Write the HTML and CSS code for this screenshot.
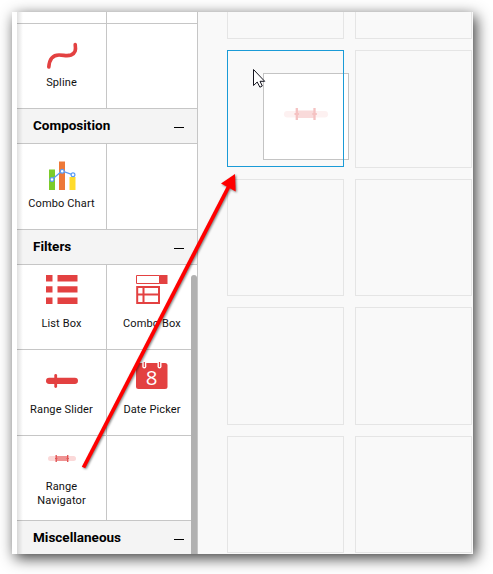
FILE: index.html
```html
<!DOCTYPE html>
<html lang="en">
<head>
<meta charset="utf-8">
<title>Dashboard Designer</title>
<link rel="stylesheet" href="styles.css">
</head>
<body>
<div class="window">
  <aside class="toolbox">
    <div class="row row-cut"><div class="tile"></div><div class="tile"></div></div>
    <div class="row">
      <div class="tile">
        <svg class="icon" width="34" height="34" viewBox="0 0 34 34"><path d="M3.800 32C4.500 23 9 20 14 20C19 20 22 21.500 26 20C30.500 18 31 15 30.200 9.500" fill="none" stroke="#e34141" stroke-width="3.600" stroke-linecap="round"/></svg>
        <span>Spline</span>
      </div>
      <div class="tile"></div>
    </div>
    <h2 class="section">Composition<i class="minus"></i></h2>
    <div class="row tall">
      <div class="tile">
        <svg class="icon" width="34" height="34" viewBox="0 0 34 34">
          <path fill="#7ccc29" d="M4 13.500h6V34H4z"/><path fill="#ed7838" d="M14 5.500h6V34h-6z"/><path fill="#ffdb2b" d="M24.500 21h6v13h-6z"/>
          <path d="M7 23.500l10-8.500 11 3.800" fill="none" stroke="#5b9cf5" stroke-width="1.300"/>
          <g fill="#fff" stroke="#5b9cf5" stroke-width="1.200"><circle cx="7" cy="23.500" r="1.900"/><circle cx="17.200" cy="15.300" r="1.900"/><circle cx="28" cy="18.800" r="1.900"/></g>
        </svg>
        <span>Combo Chart</span>
      </div>
      <div class="tile"></div>
    </div>
    <h2 class="section">Filters<i class="minus"></i></h2>
    <div class="row">
      <div class="tile high-icon">
        <svg class="icon" width="34" height="34" viewBox="0 0 34 34"><path fill="#e34141" d="M1 5h6.500v6.500H1zM12.500 5h20v6.500h-20zM1 16.300h6.500v6.300H1zM12.500 16.300h20v6.300h-20zM1 27.500h6.500V34H1zM12.500 27.500h20V34h-20z"/></svg>
        <span>List Box</span>
      </div>
      <div class="tile high-icon">
        <svg class="icon" width="34" height="34" viewBox="0 0 34 34"><path d="M1.500 5.500h23v8h-23z" fill="none" stroke="#e34141"/><path fill="#e34141" d="M24.500 5H32.500v9h-8z"/><path d="M2.200 17H24v16H2.200zM2 24.500h22M8.500 17v16" fill="none" stroke="#e34141" stroke-width="2"/></svg>
        <span>Combo Box</span>
      </div>
    </div>
    <div class="row tall">
      <div class="tile">
        <svg class="icon" width="34" height="34" viewBox="0 0 34 34"><rect x="1" y="15.700" width="32" height="6.300" rx="3.150" fill="#e34141"/><rect x="9.300" y="12" width="2.800" height="14" rx="1.400" fill="#e34141"/></svg>
        <span>Range Slider</span>
      </div>
      <div class="tile">
        <svg class="icon" width="34" height="34" viewBox="0 0 34 34"><rect x="1" y="1" width="31.500" height="26" rx="2.500" fill="#e34141"/><rect x="7.300" y="-1.500" width="4" height="8" rx="2" fill="#fff"/><rect x="22.500" y="-1.500" width="4" height="8" rx="2" fill="#fff"/><path d="M9.300 0v5M24.500 0v5" stroke="#e34141" stroke-width="1.200"/><text x="16.800" y="22.500" class="day">8</text></svg>
        <span>Date Picker</span>
      </div>
    </div>
    <div class="row">
      <div class="tile two-line">
        <svg class="icon" width="34" height="34" viewBox="0 0 34 34"><rect x="3" y="15" width="28" height="5" rx="2.500" fill="#fbd9d9"/><rect x="11" y="15" width="12" height="5" fill="#ef9292"/><path d="M11.200 14v7M22.700 14v7" stroke="#e15656" stroke-width="1.400"/><path d="M10 17.500h2.400M21.500 17.500h2.400" stroke="#e15656"/></svg>
        <span>Range<br>Navigator</span>
      </div>
      <div class="tile"></div>
    </div>
    <h2 class="section last">Miscellaneous<i class="minus"></i></h2>
    <div class="edge-shade"></div>
    <div class="scroll-thumb"></div>
  </aside>
  <main class="canvas">
    <div class="cell"></div><div class="cell"></div>
    <div class="cell selected">
      <div class="drag-card"><svg width="46" height="14" viewBox="0 0 46 14"><rect x="1" y="4" width="44" height="6.500" rx="3.250" fill="#fdf1f1"/><rect x="13.500" y="3.500" width="18" height="7.500" fill="#f9dada"/><path d="M13.800 1v12M31.500 1v12" stroke="#f5c2c2" stroke-width="2.300"/><path d="M11.500 7h4.500M29.300 7h4.500" stroke="#f5c2c2" stroke-width="2"/></svg></div>
    </div>
    <div class="cell"></div>
    <div class="cell"></div><div class="cell"></div>
    <div class="cell"></div><div class="cell"></div>
    <div class="cell"></div><div class="cell"></div>
  </main>
</div>
<svg class="overlay" width="493" height="574" viewBox="0 0 493 574">
  <g class="arrow"><path d="M83.500 467.500L229 186" stroke="#f00" stroke-width="3.800"/><path d="M235 174l.7 17.500-14.700-8z" fill="#f00"/></g>
  <path d="M253.500 69.500v16l3.700-3.500 2.700 5.200 2.400-1.200-2.300-4.700h4.700z" fill="#fff" stroke="#15151f" stroke-width="1"/>
</svg>
</body>
</html>
```
FILE: styles.css
```css
* { box-sizing: border-box; }
body {
  margin: 0;
  height: 574px;
  padding: 12px;
  overflow: hidden;
  background: #fff;
  font-family: Roboto, sans-serif;
  color: #111;
}
.window {
  display: flex;
  width: 461px;
  height: 542px;
  overflow: hidden;
  background: #f9f9f9;
}
body::before {
  content: "";
  position: absolute;
  z-index: -1;
  left: 12px;
  top: 12px;
  width: 461px;
  height: 542px;
  box-shadow: 3px 4px 14px rgba(0, 0, 0, .78);
}
.toolbox {
  position: relative;
  flex: none;
  width: 186px;
  padding-left: 5px;
  background: #fff;
  border-right: 1px solid #c6c6c6;
}
.row {
  display: grid;
  grid-template-columns: 90px 90px;
  height: 85px;
  border-bottom: 1px solid #c6c6c6;
}
.row-cut { height: 12px; }
.tall { height: 86px; }
.tile {
  display: flex;
  flex-direction: column;
  align-items: center;
  padding-top: 5px;
  text-align: center;
  font-size: 11px;
  line-height: 14px;
  letter-spacing: .13px;
}
.row-cut .tile { padding: 0; }
.tall .tile { padding-top: 6px; }
.tile:first-child { border-right: 1px solid #c6c6c6; }
.icon { flex: none; overflow: visible; margin: 6px 0 7px; }
.high-icon .icon { margin: 0 0 13px; }
.two-line .icon { margin: 0 0 5px; }
.day { fill: #fff; font: 500 20.500px "Open Sans", sans-serif; text-anchor: middle; }
.section {
  display: flex;
  align-items: center;
  justify-content: space-between;
  height: 35px;
  margin: 0;
  padding: 0 13px 2px 16px;
  background: #f4f4f4;
  border-bottom: 1px solid #c6c6c6;
  color: #000;
  font-size: 13.500px;
  font-weight: 700;
  letter-spacing: 0;
}
.last { height: 33px; padding-bottom: 1px; border: 0; }
.minus { width: 10px; height: 1px; margin-top: 4px; background: #000; }
.edge-shade {
  position: absolute;
  left: 5px;
  top: 0;
  width: 6px;
  height: 100%;
  background: linear-gradient(90deg, rgba(0, 0, 0, .12), transparent);
}
.scroll-thumb {
  position: absolute;
  right: 0;
  top: 263px;
  width: 6px;
  height: 279px;
  border-radius: 3px 3px 0 0;
  background: #b1b1b1;
}
.canvas {
  display: grid;
  grid-template-columns: 117px 117px;
  grid-template-rows: 27px 118px 117px 118px 117px;
  gap: 11px;
  padding-left: 29px;
}
.cell { border: 1px solid #e5e5e5; }
.cell:nth-child(-n+2) { border-top: 0; }
.selected { position: relative; height: 117px; border: 0; }
.selected::after {
  content: "";
  position: absolute;
  inset: 0;
  border: 1px solid #1a9bd7;
}
.drag-card {
  position: absolute;
  left: 36px;
  top: 23px;
  display: flex;
  align-items: center;
  justify-content: center;
  width: 86px;
  height: 87px;
  padding-bottom: 5px;
  background: #fff;
  border: 1px solid #c4c4c4;
}
.overlay { position: absolute; left: 0; top: 0; pointer-events: none; }
.arrow { filter: drop-shadow(1.500px 1.500px 1px rgba(0, 0, 0, .5)); }
```
